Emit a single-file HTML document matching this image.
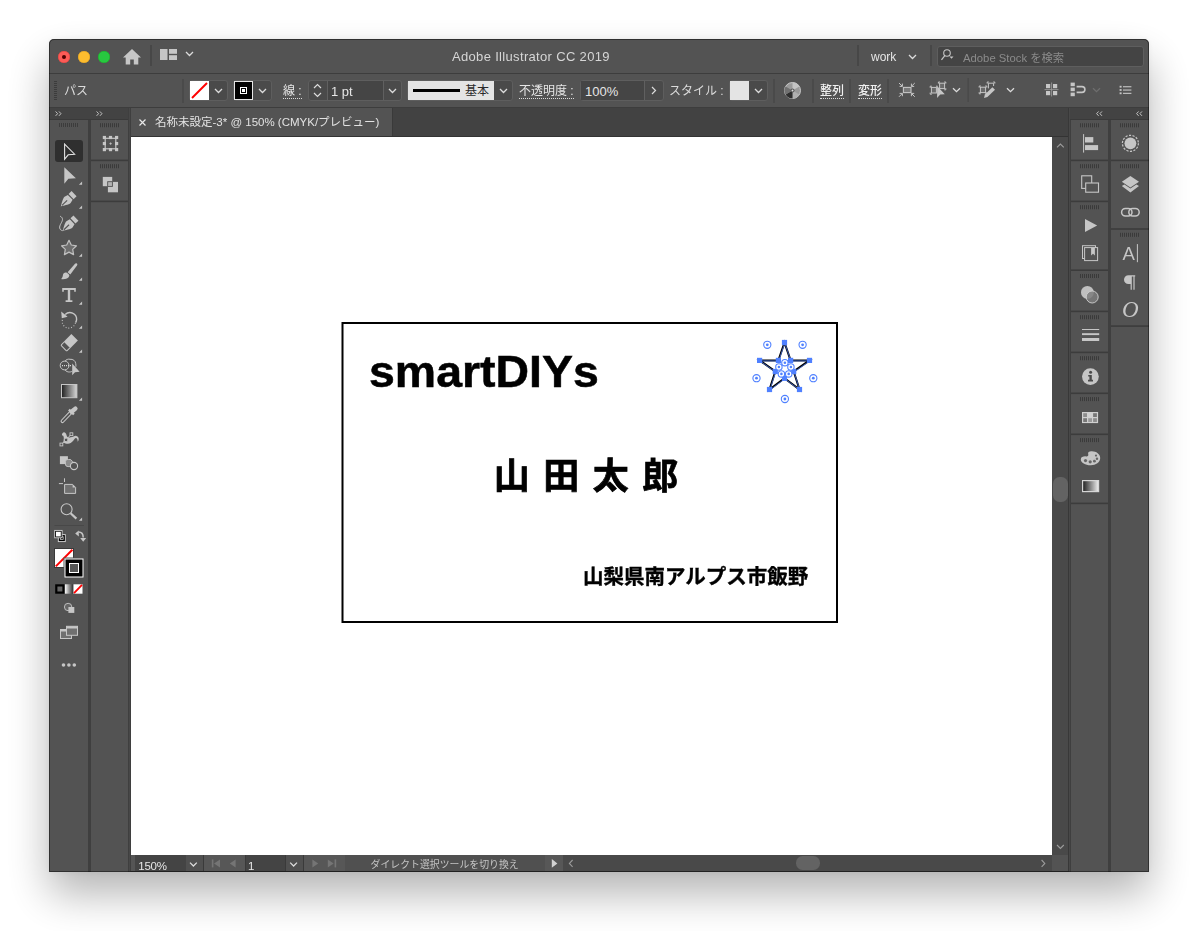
<!DOCTYPE html>
<html lang="ja">
<head>
<meta charset="utf-8">
<title>Adobe Illustrator CC 2019</title>
<style>
*{box-sizing:border-box;margin:0;padding:0}
html,body{width:1204px;height:931px;overflow:hidden;background:#fff}
body{font-family:"Liberation Sans","Noto Sans CJK JP",sans-serif;color:#dcdcdc;font-size:12px;position:relative}
.abs{position:absolute}
#win{opacity:.999;position:absolute;left:49px;top:39px;width:1100px;height:833px;background:#535353;border-radius:5px 5px 0 0;
 box-shadow:0 22px 44px rgba(0,0,0,.30),0 0 6px rgba(0,0,0,.06);overflow:hidden}
#win>*{position:absolute}
/* all coordinates below are page coords minus (49,39) */
#titlebar{left:0;top:0;width:1100px;height:35px;background:#535353;border-bottom:1px solid #3d3d3d}
#ctrlbar{left:0;top:35px;width:1100px;height:34px;background:#535353;border-bottom:1px solid #3d3d3d}
.tl{position:absolute;width:12px;height:12px;border-radius:50%;top:12px}
.t{position:absolute;white-space:nowrap;line-height:1}
.sep{position:absolute;width:1px;background:#484848}
.box{position:absolute;border:1px solid #5e5e5e;border-radius:3px;background:#4a4a4a}
.dark{background:#454545}
.dot{border-bottom:1px dotted #dcdcdc}
svg{position:absolute;overflow:visible}
.panel{position:absolute;background:#535353;border:1px solid #3f3f3f}
.grip{position:absolute;height:4px;width:20px;background:repeating-linear-gradient(90deg,#3c3c3c 0 1px,transparent 1px 2px)}
#frame{left:0;top:0;width:1100px;height:833px;border:1px solid rgba(0,0,0,.42);border-radius:5px 5px 0 0;pointer-events:none;z-index:50}
</style>
</head>
<body>
<div id="win">
 <div id="titlebar">
  <div class="tl" style="left:9px;background:#fc5b57;box-shadow:inset 0 0 0 .5px #e2443f"><div class="abs" style="left:4px;top:4px;width:4px;height:4px;border-radius:50%;background:#4d0000"></div></div>
  <div class="tl" style="left:29px;background:#fdbc2e;box-shadow:inset 0 0 0 .5px #dfa023"></div>
  <div class="tl" style="left:49px;background:#28c840;box-shadow:inset 0 0 0 .5px #1dad2b"></div>
  <svg style="left:74px;top:10px" width="18" height="16" viewBox="0 0 18 16"><path d="M9 0 L18 8.6 H15.3 V15.5 H10.8 V10.6 H7.2 V15.5 H2.7 V8.6 H0 Z" fill="#c6c6c6"/></svg>
  <div class="sep" style="left:101px;top:6px;height:21px;background:#474747;width:2px"></div>
  <svg style="left:111px;top:10px" width="17" height="11" viewBox="0 0 17 11"><rect x="0" y="0" width="7.5" height="11" fill="#c6c6c6"/><rect x="9" y="0" width="8" height="4.8" fill="#c6c6c6"/><rect x="9" y="6.2" width="8" height="4.8" fill="#c6c6c6"/></svg>
  <svg style="left:136px;top:12px" width="9" height="6" viewBox="0 0 9 6"><path d="M1 1 L4.5 4.5 L8 1" fill="none" stroke="#dcdcdc" stroke-width="1.3"/></svg>
  <div class="t" style="left:403px;top:11px;font-size:13px;letter-spacing:.33px;color:#d6d6d6">Adobe Illustrator CC 2019</div>
  <div class="sep" style="left:808px;top:6px;height:21px;background:#474747;width:2px"></div>
  <div class="t" style="left:822px;top:12px;font-size:12px;color:#e6e6e6">work</div>
  <svg style="left:859px;top:15px" width="9" height="6" viewBox="0 0 9 6"><path d="M1 1 L4.5 4.5 L8 1" fill="none" stroke="#dcdcdc" stroke-width="1.3"/></svg>
  <div class="sep" style="left:881px;top:6px;height:21px;background:#474747;width:2px"></div>
  <div class="box" style="left:888px;top:7px;width:207px;height:21px;background:#444;border-color:#5e5e5e"></div>
  <svg style="left:892px;top:10px" width="13" height="12" viewBox="0 0 13 12"><circle cx="6" cy="4" r="3.3" fill="none" stroke="#c6c6c6" stroke-width="1.1"/><path d="M3.8 6.6 L0.5 10.8" stroke="#c6c6c6" stroke-width="1.2"/><path d="M8.5 7.5 H12.5 L10.5 9.7 Z" fill="#c6c6c6"/></svg>
  <div class="t" style="left:914px;top:13.5px;font-size:11.3px;color:#8b8b8b">Adobe Stock を検索</div>
 </div>
 <div id="ctrlbar">
  <div class="abs" style="left:5px;top:7px;width:3px;height:19px;background:repeating-linear-gradient(180deg,#3c3c3c 0 1px,transparent 1px 2px)"></div>
  <div class="t" style="left:15px;top:11px;font-size:12px;color:#dcdcdc">パス</div>
  <div class="sep" style="left:133px;top:5px;height:24px;width:2px;background:#4a4a4a"></div>
  <!-- fill -->
  <div class="box" style="left:140px;top:6px;width:39px;height:21px"></div>
  <div class="abs" style="left:141px;top:7px;width:19px;height:19px;background:#fff"></div>
  <svg style="left:141px;top:7px" width="19" height="19" viewBox="0 0 19 19"><path d="M2 17 L17 2" stroke="#ff0000" stroke-width="2"/></svg>
  <svg style="left:165px;top:14px" width="9" height="6" viewBox="0 0 9 6"><path d="M1 1 L4.5 4.5 L8 1" fill="none" stroke="#dcdcdc" stroke-width="1.3"/></svg>
  <!-- stroke -->
  <div class="box" style="left:184px;top:6px;width:39px;height:21px"></div>
  <div class="abs" style="left:185px;top:7px;width:19px;height:19px;background:#000;border:1px solid #e6e6e6"></div>
  <div class="abs" style="left:191px;top:13px;width:7px;height:7px;border:1px solid #fff"></div>
  <div class="abs" style="left:193px;top:15px;width:3px;height:3px;background:#fff"></div>
  <svg style="left:209px;top:14px" width="9" height="6" viewBox="0 0 9 6"><path d="M1 1 L4.5 4.5 L8 1" fill="none" stroke="#dcdcdc" stroke-width="1.3"/></svg>
  <div class="t dot" style="left:234px;top:11px;font-size:12px;color:#e6e6e6;padding-bottom:1px">線&nbsp;:</div>
  <!-- stroke weight -->
  <div class="box" style="left:259px;top:6px;width:94px;height:21px"></div>
  <div class="abs dark" style="left:278px;top:7px;width:57px;height:19px;border-left:1px solid #606060;border-right:1px solid #606060"></div>
  <svg style="left:264px;top:9px" width="9" height="15" viewBox="0 0 9 15"><path d="M1 5 L4.5 1.5 L8 5 M1 10 L4.5 13.5 L8 10" fill="none" stroke="#dcdcdc" stroke-width="1.2"/></svg>
  <div class="t" style="left:282px;top:11px;font-size:13px;color:#e6e6e6">1 pt</div>
  <svg style="left:339px;top:14px" width="9" height="6" viewBox="0 0 9 6"><path d="M1 1 L4.5 4.5 L8 1" fill="none" stroke="#dcdcdc" stroke-width="1.3"/></svg>
  <!-- brush -->
  <div class="box" style="left:358px;top:6px;width:106px;height:21px"></div>
  <div class="abs" style="left:359px;top:7px;width:86px;height:19px;background:#e4e4e4"></div>
  <div class="abs" style="left:364px;top:15px;width:47px;height:3px;background:#000"></div>
  <div class="t" style="left:416px;top:11px;font-size:12px;color:#2a2a2a">基本</div>
  <svg style="left:450px;top:14px" width="9" height="6" viewBox="0 0 9 6"><path d="M1 1 L4.5 4.5 L8 1" fill="none" stroke="#dcdcdc" stroke-width="1.3"/></svg>
  <div class="t dot" style="left:470px;top:11px;font-size:12px;color:#e6e6e6;padding-bottom:1px">不透明度&nbsp;:</div>
  <div class="box" style="left:531px;top:6px;width:84px;height:21px"></div>
  <div class="abs dark" style="left:532px;top:7px;width:64px;height:19px;border-right:1px solid #606060"></div>
  <div class="t" style="left:536px;top:11px;font-size:13px;color:#e6e6e6">100%</div>
  <svg style="left:602px;top:12px" width="6" height="9" viewBox="0 0 6 9"><path d="M1 1 L4.5 4.5 L1 8" fill="none" stroke="#dcdcdc" stroke-width="1.2"/></svg>
  <div class="t" style="left:620px;top:11px;font-size:12px;color:#dcdcdc">スタイル&nbsp;:</div>
  <div class="box" style="left:680px;top:6px;width:39px;height:21px"></div>
  <div class="abs" style="left:681px;top:7px;width:19px;height:19px;background:#e4e4e4"></div>
  <svg style="left:705px;top:14px" width="9" height="6" viewBox="0 0 9 6"><path d="M1 1 L4.5 4.5 L8 1" fill="none" stroke="#dcdcdc" stroke-width="1.3"/></svg>
  <div class="sep" style="left:724px;top:5px;height:24px;width:2px;background:#4a4a4a"></div>
  <svg style="left:735px;top:8px" width="17" height="17" viewBox="0 0 17 17"><circle cx="8.5" cy="8.5" r="8" fill="#9a9a9a" stroke="#c8c8c8" stroke-width="1"/><path d="M8.5 8.5 L8.5 .5 A8 8 0 0 1 15.4 4.5 Z" fill="#c4c4c4"/><path d="M8.5 8.5 L15.4 12.5 A8 8 0 0 1 8.5 16.5 Z" fill="#b0b0b0"/><path d="M8.5 8.5 L8.5 16.5 A8 8 0 0 1 1.6 12.5 Z" fill="#2e2e2e"/><path d="M8.5 8.5 L1.6 12.5 A8 8 0 0 1 1.6 4.5 Z" fill="#707070"/><circle cx="8.5" cy="8.5" r="2" fill="#555"/><circle cx="8.5" cy="8.5" r="1" fill="#ddd"/></svg>
  <div class="sep" style="left:763px;top:5px;height:24px;width:2px;background:#4a4a4a"></div>
  <div class="t dot" style="left:771px;top:11px;font-size:12px;color:#f0f0f0;padding-bottom:1px;font-weight:500">整列</div>
  <div class="sep" style="left:800px;top:5px;height:24px;width:2px;background:#4a4a4a"></div>
  <div class="t dot" style="left:809px;top:11px;font-size:12px;color:#f0f0f0;padding-bottom:1px;font-weight:500">変形</div>
  <div class="sep" style="left:838px;top:5px;height:24px;width:2px;background:#4a4a4a"></div>
  <svg style="left:0;top:0" width="1100" height="33" viewBox="49 74 1100 33">
<g fill="none" stroke="#c6c6c6" stroke-width="1">
 <!-- isolate -->
 <rect x="903.4" y="87.4" width="7.6" height="5.2" fill="#7a7a7a" stroke-width="1.1"/>
 <path d="M899,83 L902.2,86.2 M914.8,83 L911.6,86.2 M899,96.8 L902.2,93.6 M914.8,96.8 L911.6,93.6"/>
 <path d="M899.6,86.4 H902.4 V83.6 M914.2,86.4 H911.4 V83.6 M899.6,93.4 H902.4 V96.2 M914.2,93.4 H911.4 V96.2"/>
 <!-- select similar -->
 <rect x="931.4" y="87.4" width="5" height="5.6" fill="#6a6a6a"/>
 <path d="M930.2,86.2 h1.6 M930.2,86.2 v1.6 M930.2,94.2 h1.6 M930.2,94.2 v-1.6 M937.6,86.2 h-1.6"/>
 <rect x="939.6" y="83.2" width="5" height="5.4" fill="#6a6a6a"/>
 <path d="M938.4,82 h1.6 M938.4,82 v1.6 M945.8,82 h-1.6 M945.8,82 v1.6 M945.8,89.8 h-1.6 M945.8,89.8 v-1.6 M938.4,89.8 v-1.6"/>
 <!-- recolor -->
 <rect x="980.4" y="87.2" width="5.2" height="5.4" fill="#6a6a6a"/>
 <path d="M979.2,86 h1.6 M979.2,86 v1.6 M979.2,93.8 h1.6 M979.2,93.8 v-1.6 M986.8,86 h-1.6 M986.8,86 v1.6 M986.8,93.8 h-1.6 M986.8,93.8 v-1.6"/>
 <path d="M988.4,88.4 V83.2 H993.6 V86" />
 <path d="M987.2,82 h1.6 M987.2,82 v1.6 M994.8,82 h-1.6 M994.8,82 v1.6"/>
</g>
<path d="M937.1,86 V98 L940.2,94.6 L944.8,94.2 Z" fill="#c6c6c6"/>
<path d="M992.4,87.2 L995,89.8 L987.4,97 L984,97.9 L984.9,94.5 Z" fill="#c6c6c6"/>
<g fill="none" stroke="#dcdcdc" stroke-width="1.3">
 <path d="M953,88.2 L956.5,91.7 L960,88.2"/>
 <path d="M1007,88.2 L1010.5,91.7 L1014,88.2"/>
 <path d="M1093,88.2 L1096.5,91.7 L1100,88.2" stroke="#6e6e6e"/>
</g>
<rect x="967.4" y="78" width="1.6" height="24" fill="#4a4a4a"/>
<!-- grid icon -->
<g fill="#c6c6c6">
 <rect x="1046" y="84" width="4.2" height="4.2"/><rect x="1053" y="84" width="4.2" height="4.2"/><rect x="1046" y="91" width="4.2" height="4.2"/><rect x="1053" y="91" width="4.2" height="4.2"/>
 <rect x="1051.2" y="82.5" width=".9" height="14" fill="#9a9a9a"/><rect x="1044.5" y="89.2" width="14" height=".9" fill="#9a9a9a"/>
 <!-- snap icon -->
 <rect x="1070.6" y="82.6" width="4.2" height="3.6"/><rect x="1070.6" y="87.6" width="4.2" height="3.6"/><rect x="1070.6" y="92.6" width="4.2" height="3.6"/>
 <!-- list icon -->
 <rect x="1119.6" y="85.8" width="2" height="1.8"/><rect x="1119.6" y="89.1" width="2" height="1.8"/><rect x="1119.6" y="92.4" width="2" height="1.8"/>
 <rect x="1123" y="86.2" width="8.4" height="1.1"/><rect x="1123" y="89.5" width="8.4" height="1.1"/><rect x="1123" y="92.8" width="8.4" height="1.1"/>
</g>
<path d="M1076.6,86.6 H1082 A2.9,2.9 0 0 1 1082,92.4 H1076.6" fill="none" stroke="#c6c6c6" stroke-width="1.6"/>
</svg>

 </div>

 <!-- LEFT DOCK -->
 <div id="ldock" style="left:0;top:69px;width:82px;height:764px;background:#3f3f3f">
  <div class="abs" style="left:0;top:0;width:79px;height:12px;background:#434343;border-bottom:1px solid #3a3a3a"></div>
  <svg style="left:5.8px;top:3.4px" width="7" height="5.3" viewBox="0 0 8 6"><path d="M.7 .5 L3 3 L.7 5.5 M4.5 .5 L6.8 3 L4.5 5.5" fill="none" stroke="#c8c8c8" stroke-width="1.1"/></svg><svg style="left:46.8px;top:3.4px" width="7" height="5.3" viewBox="0 0 8 6"><path d="M.7 .5 L3 3 L.7 5.5 M4.5 .5 L6.8 3 L4.5 5.5" fill="none" stroke="#c8c8c8" stroke-width="1.1"/></svg>
  <div class="abs" id="tools" style="left:0;top:12px;width:39px;height:752px;background:#535353">
   <div class="grip" style="left:10px;top:3px"></div>
   <svg style="left:0;top:0" width="39" height="752" viewBox="49 120 39 752">
<defs>
 <g id="nib"><path d="M0,0.4 C-1.2,-1.8 -4.4,-6.4 -4.4,-9 L-3.4,-12.7 L3.4,-12.7 L4.4,-9 C4.4,-6.4 1.2,-1.8 0,0.4Z" fill="#c6c6c6"/><path d="M0,-1.2 L0,-8.4" stroke="#535353" stroke-width="1.1"/><rect x="-3.6" y="-18" width="7.2" height="4.1" fill="#c6c6c6"/></g>
 <linearGradient id="gr1" x1="0" x2="1" y1="0" y2="0"><stop offset="0" stop-color="#1e1e1e"/><stop offset="1" stop-color="#d8d8d8"/></linearGradient>
 <linearGradient id="gr2" x1="0" x2="1" y1="0" y2="0"><stop offset="0" stop-color="#fff"/><stop offset="1" stop-color="#333"/></linearGradient>
</defs>
<g fill="#c6c6c6">
<!-- corner triangles -->
<path d="M82.1,181.6V184.8H78.9Z M82.1,205.6V208.8H78.9Z M82.1,253.6V256.8H78.9Z M82.1,277.6V280.8H78.9Z M82.1,301.6V304.8H78.9Z M82.1,325.6V328.8H78.9Z M82.1,349.6V352.8H78.9Z M82.1,397.6V400.8H78.9Z M82.1,517.6V520.8H78.9Z"/>
</g>
<!-- 0 selection -->
<rect x="55" y="140" width="28" height="22" rx="3" fill="#2f2f2f"/>
<path d="M64.6,144.2 V159.2 L68.2,154.8 L74.6,154.2 Z" fill="none" stroke="#e2e2e2" stroke-width="1.1" stroke-linejoin="miter"/>
<!-- 1 direct selection -->
<path d="M64.3,167.2 V183.8 L68.4,178.8 L75.9,178.2 Z" fill="#c6c6c6"/>
<!-- 2 pen -->
<use href="#nib" transform="translate(61.1,206.2) rotate(46)"/>
<!-- 3 curvature -->
<use href="#nib" transform="translate(63,230.6) rotate(46)"/>
<path d="M60.2,216.2 C63.6,218 62.6,220.6 61,223.4 C59,226.8 59,230 62.7,230.7" fill="none" stroke="#c6c6c6" stroke-width="1"/>
<!-- 4 star -->
<polygon points="69.0,240.3 71.3,245.0 76.5,245.8 72.7,249.4 73.6,254.6 69.0,252.1 64.4,254.6 65.3,249.4 61.5,245.8 66.7,245.0" fill="#6e6e6e" stroke="#c0c0c0" stroke-width="1.2" stroke-linejoin="round"/>
<!-- 5 brush -->
<path d="M76.3,263.3 C77.4,263.6 77.6,264.6 77,265.6 L70.3,274.6 L67.6,272.2 L75,263.8 C75.4,263.4 75.8,263.2 76.3,263.3Z" fill="#c6c6c6"/>
<path d="M67.2,273 C65.2,271.8 63.2,273 62.9,275.2 C62.7,277 62,278.3 61,279 C64.5,279.6 68.4,278.6 69.3,276 C69.6,274.9 68.8,273.8 67.2,273Z" fill="#c6c6c6"/>
<!-- 6 type -->
<path d="M62.2,287.9 H75.8 V291.8 H74.2 V290 H70.2 V300.2 H72.4 V301.9 H65.6 V300.2 H67.8 V290 H63.8 V291.8 H62.2 Z" fill="#c6c6c6"/>
<!-- 7 rotate -->
<path d="M65.2,314.6 A6.6,6.6 0 0 1 76.6,319.4 A6.6,6.6 0 0 1 75.6,322.6" fill="none" stroke="#c6c6c6" stroke-width="1.4"/>
<path d="M75.4,323 A6.6,6.6 0 0 1 62.4,319.8" fill="none" stroke="#c6c6c6" stroke-width="1.1" stroke-dasharray="0.9 1.9"/>
<path d="M61.2,311.6 L61.8,318.2 L67.6,316.8 Z" fill="#c6c6c6"/>
<!-- 8 eraser -->
<g transform="translate(69.4,342.5) rotate(-45)"><rect x="-3.4" y="-4.6" width="10.8" height="9.2" fill="#c6c6c6"/><path d="M-3.4,-4.1 H-7 A1,1 0 0 0 -8,-3.1 V3.1 A1,1 0 0 0 -7,4.1 H-3.4" fill="none" stroke="#c6c6c6" stroke-width="1"/></g>
<!-- 9 shape builder -->
<circle cx="64.6" cy="365.5" r="4.4" fill="none" stroke="#c6c6c6" stroke-width="1"/>
<path d="M65,361.2 C66,359.5 68.4,358.8 70,359.3 C73,358.9 75.4,360.9 75.7,363.4 C75.9,364.6 76,365.8 75.9,366.7 M65,369.9 C66.2,371.5 68,372.1 69.4,372 C70.4,372 71,371.8 71.8,371.5" fill="none" stroke="#c6c6c6" stroke-width="1"/>
<path d="M62,365.6 H71.6" stroke="#d6d6d6" stroke-width="1.1" stroke-dasharray="1 1"/>
<path d="M72.2,363.4 V375.2 L75,372.2 L79.6,371.7 Z" fill="#c6c6c6"/>
<!-- 10 gradient -->
<rect x="61.5" y="384.5" width="15.4" height="13.2" fill="url(#gr1)" stroke="#c6c6c6" stroke-width="1"/>
<!-- 11 eyedropper -->
<path d="M62.4,421.2 L70.6,412.6" stroke="#c6c6c6" stroke-width="3.7" stroke-linecap="round"/>
<path d="M62.5,421.1 L71.4,411.8" stroke="#535353" stroke-width="1.7" stroke-linecap="round"/>
<path d="M71.6,411.8 L75.4,408.6" stroke="#c6c6c6" stroke-width="4.4" stroke-linecap="round"/>
<path d="M68.9,409.7 L73.9,414.5" stroke="#c6c6c6" stroke-width="2.4"/>
<!-- 12 puppet warp -->
<path d="M62,435.6 C61.6,433.4 63,432.1 64.2,432.2 C65.6,432.4 66.4,434.2 66.9,436.2 C67.4,437.6 69.6,437.9 72,437.1 C73.6,436.5 74.6,435.6 75.8,435.7 C77.8,435.9 79,437.6 78.7,439.6 C78.6,440.6 78.2,441.4 77.7,441.8 C77.7,440 77.2,438.4 76.1,438.1 C75,437.9 74.2,439.8 73,441 C71.6,442.6 70,443.8 67.9,443.8 C66.2,443.8 64.6,443.4 63.5,442.5 C63.2,441.2 63.9,439.8 63.8,438.4 C63.8,437.4 63.7,436.4 63.2,435.8 C62.8,435.4 62.4,435.4 62,435.6Z" fill="#c6c6c6"/>
<path d="M61.4,444.5 L71.4,434.2" stroke="#c6c6c6" stroke-width="1"/>
<rect x="60" y="443.1" width="2.8" height="2.8" fill="#535353" stroke="#c6c6c6" stroke-width=".9"/>
<circle cx="66.1" cy="439.9" r="1.8" fill="#535353" stroke="#c6c6c6" stroke-width=".9"/>
<rect x="70" y="432.8" width="2.8" height="2.8" fill="#535353" stroke="#c6c6c6" stroke-width=".9"/>
<!-- 13 blend -->
<rect x="59.9" y="456.2" width="8" height="7.9" fill="#c6c6c6"/>
<path d="M68.4,459.5 H70.6 L72.6,461.5 V466.6 H68 A2.6,2.6 0 0 1 65.4,464 V461.6 A2.1,2.1 0 0 1 67.5,459.5Z" fill="#8a8a8a" stroke="#c6c6c6" stroke-width=".9"/>
<circle cx="74" cy="466" r="3.6" fill="#535353" stroke="#c6c6c6" stroke-width="1.1"/>
<!-- 14 artboard -->
<path d="M64.5,478.3 V482 M58.9,483.6 H63" stroke="#c6c6c6" stroke-width="1"/>
<path d="M64.6,484.4 H72.6 L75.6,487.4 V493.4 H64.6 Z" fill="#707070" stroke="#c6c6c6" stroke-width="1"/>
<path d="M72.6,484.4 V487.4 H75.6 Z" fill="#c6c6c6"/>
<!-- 15 zoom -->
<circle cx="66.6" cy="509.3" r="5.5" fill="none" stroke="#c6c6c6" stroke-width="1.1"/>
<path d="M70.6,513.3 L76.4,518.6" stroke="#c6c6c6" stroke-width="2.2"/>
<!-- separator -->
<path d="M54.5,525.5 H84" stroke="#484848" stroke-width="1"/>
<!-- default fill/stroke -->
<rect x="58.3" y="534.6" width="7" height="7" fill="#000" stroke="#d8d8d8" stroke-width=".9"/>
<rect x="60.4" y="536.7" width="2.8" height="2.8" fill="none" stroke="#d8d8d8" stroke-width=".7"/>
<rect x="54.7" y="530.4" width="7.4" height="7.4" fill="#000" stroke="#d8d8d8" stroke-width=".9"/>
<rect x="56" y="531.7" width="4.8" height="4.8" fill="#fff"/>
<!-- swap -->
<path d="M78.6,532 C81.6,532 83.2,534.2 83.2,537.6" fill="none" stroke="#c6c6c6" stroke-width="1.5"/>
<path d="M75.2,533.4 L78.8,530.4 V536.4 Z M80.2,538 H86.2 L83.2,541.8 Z" fill="#c6c6c6"/>
<!-- fill -->
<rect x="54.5" y="548.5" width="19" height="19" fill="#fff" stroke="#3a3a3a" stroke-width="1"/>
<path d="M55.8,566.4 L72.4,549.8" stroke="#ff0000" stroke-width="2"/>
<!-- stroke -->
<rect x="63.5" y="557.5" width="21" height="21" fill="#535353"/>
<rect x="65" y="559" width="18" height="18" fill="#000" stroke="#fff" stroke-width="1"/>
<rect x="69.5" y="563.5" width="9" height="9" fill="#555" stroke="#fff" stroke-width="1"/>
<!-- color modes -->
<rect x="55.2" y="584.3" width="9.4" height="9.4" fill="#000"/><rect x="57.4" y="586.5" width="5" height="5" fill="#666"/>
<rect x="64.9" y="584.3" width="8" height="9.4" fill="url(#gr2)"/>
<rect x="73.5" y="584.3" width="9" height="9.4" fill="#fff"/><path d="M74,593.2 L82,584.8" stroke="#ff0000" stroke-width="1.8"/>
<!-- draw mode -->
<circle cx="68.1" cy="607" r="3.7" fill="#666" stroke="#c6c6c6" stroke-width=".9"/>
<rect x="68.4" y="607" width="5.9" height="5.9" fill="#c6c6c6"/>
<!-- screen mode -->
<rect x="60.5" y="629.5" width="11" height="9" fill="#707070" stroke="#c6c6c6" stroke-width="1"/><rect x="60.5" y="629.5" width="11" height="2" fill="#c6c6c6"/>
<rect x="66.5" y="626.3" width="11" height="9" fill="#707070" stroke="#c6c6c6" stroke-width="1"/><rect x="66.5" y="626.3" width="11" height="2.2" fill="#c6c6c6"/>
<!-- more -->
<circle cx="63.5" cy="665" r="1.8" fill="#c6c6c6"/><circle cx="68.9" cy="665" r="1.8" fill="#c6c6c6"/><circle cx="74.3" cy="665" r="1.8" fill="#c6c6c6"/>
</svg>

  </div>
  <div class="abs" style="left:80px;top:0;width:1px;height:764px;background:#484848"></div>
  <div class="abs" style="left:42px;top:12px;width:37px;height:752px;background:#535353;overflow:hidden">
   <svg style="left:0;top:0" width="38" height="752" viewBox="91 120 38 752">
<rect x="100" y="123.2" width="1" height="4" fill="#3a3a3a"/><rect x="102" y="123.2" width="1" height="4" fill="#3a3a3a"/><rect x="104" y="123.2" width="1" height="4" fill="#3a3a3a"/><rect x="106" y="123.2" width="1" height="4" fill="#3a3a3a"/><rect x="108" y="123.2" width="1" height="4" fill="#3a3a3a"/><rect x="110" y="123.2" width="1" height="4" fill="#3a3a3a"/><rect x="112" y="123.2" width="1" height="4" fill="#3a3a3a"/><rect x="114" y="123.2" width="1" height="4" fill="#3a3a3a"/><rect x="116" y="123.2" width="1" height="4" fill="#3a3a3a"/><rect x="118" y="123.2" width="1" height="4" fill="#3a3a3a"/><rect x="100" y="164.2" width="1" height="4" fill="#3a3a3a"/><rect x="102" y="164.2" width="1" height="4" fill="#3a3a3a"/><rect x="104" y="164.2" width="1" height="4" fill="#3a3a3a"/><rect x="106" y="164.2" width="1" height="4" fill="#3a3a3a"/><rect x="108" y="164.2" width="1" height="4" fill="#3a3a3a"/><rect x="110" y="164.2" width="1" height="4" fill="#3a3a3a"/><rect x="112" y="164.2" width="1" height="4" fill="#3a3a3a"/><rect x="114" y="164.2" width="1" height="4" fill="#3a3a3a"/><rect x="116" y="164.2" width="1" height="4" fill="#3a3a3a"/><rect x="118" y="164.2" width="1" height="4" fill="#3a3a3a"/>
<rect x="91" y="159.6" width="38" height="1.6" fill="#3c3c3c"/><rect x="91" y="200.6" width="38" height="1.6" fill="#3c3c3c"/>
<rect x="105.2" y="138.3" width="10.6" height="10.5" fill="none" stroke="#c6c6c6" stroke-width="1.2"/>
<rect x="102.80" y="135.90" width="3.2" height="3.2" fill="#c6c6c6"/><rect x="102.80" y="141.95" width="3.2" height="3.2" fill="#c6c6c6"/><rect x="102.80" y="148.00" width="3.2" height="3.2" fill="#c6c6c6"/><rect x="108.90" y="135.90" width="3.2" height="3.2" fill="#c6c6c6"/><rect x="108.90" y="148.00" width="3.2" height="3.2" fill="#c6c6c6"/><rect x="115.00" y="135.90" width="3.2" height="3.2" fill="#c6c6c6"/><rect x="115.00" y="141.95" width="3.2" height="3.2" fill="#c6c6c6"/><rect x="115.00" y="148.00" width="3.2" height="3.2" fill="#c6c6c6"/>
<path d="M109.4,143.6 H111.8 M110.6,142.4 V144.8" stroke="#c6c6c6" stroke-width=".8"/>
<rect x="102.8" y="176.9" width="9.4" height="9.3" fill="#c6c6c6"/>
<rect x="107.9" y="181.9" width="10.1" height="10.4" fill="#c6c6c6"/>
<rect x="107.7" y="181.7" width="4.7" height="4.7" fill="#b4b4b4" stroke="#505050" stroke-width=".9"/>
</svg>
  </div>
 </div>
 <!-- DOC AREA -->
 <div id="doc" style="left:82px;top:69px;width:939px;height:764px;background:#424242">
  <div class="abs" style="left:0;top:0;width:261px;height:28px;background:#535353"></div><div class="abs" style="left:261px;top:0;width:1px;height:28px;background:#3a3a3a"></div><div class="abs" style="left:0;top:28px;width:939px;height:1px;background:#333"></div>
  <svg style="left:8px;top:11px" width="7" height="7" viewBox="0 0 7 7"><path d="M.5 .5 L6.5 6.5 M6.5 .5 L.5 6.5" stroke="#e8e8e8" stroke-width="1.2"/></svg>
  <div class="t" style="left:24px;top:8.5px;font-size:11.5px;color:#e2e2e2">名称未設定-3* @ 150% (CMYK/プレビュー)</div>
  <div class="abs" id="canvas" style="left:0;top:29px;width:921px;height:718px;background:#fff">
   <svg style="left:0;top:0" width="921" height="718" viewBox="0 0 921 718">
    <rect x="211.5" y="186" width="494.5" height="299" fill="none" stroke="#000" stroke-width="2"/>
    <polygon points="653.5,205.5 659.6,223.4 678.5,223.4 662.7,234.5 668.5,252.5 653.5,241.3 638.5,252.5 644.3,234.5 628.6,223.4 647.4,223.4" fill="none" stroke="#000" stroke-width="2"/>
    <polygon points="653.5,205.5 659.6,223.4 678.5,223.4 662.7,234.5 668.5,252.5 653.5,241.3 638.5,252.5 644.3,234.5 628.6,223.4 647.4,223.4" fill="none" stroke="#4f80ff" stroke-width="0.7" transform="translate(.3,.5)"/>
    <rect x="650.90" y="202.90" width="5.2" height="5.2" fill="#4f80ff"/><rect x="657.00" y="220.80" width="5.2" height="5.2" fill="#4f80ff"/><rect x="675.90" y="220.80" width="5.2" height="5.2" fill="#4f80ff"/><rect x="660.10" y="231.90" width="5.2" height="5.2" fill="#4f80ff"/><rect x="665.90" y="249.90" width="5.2" height="5.2" fill="#4f80ff"/><rect x="650.90" y="238.70" width="5.2" height="5.2" fill="#4f80ff"/><rect x="635.90" y="249.90" width="5.2" height="5.2" fill="#4f80ff"/><rect x="641.70" y="231.90" width="5.2" height="5.2" fill="#4f80ff"/><rect x="626.00" y="220.80" width="5.2" height="5.2" fill="#4f80ff"/><rect x="644.80" y="220.80" width="5.2" height="5.2" fill="#4f80ff"/><circle cx="636.3" cy="207.8" r="3.6" fill="#fff" stroke="#4f80ff" stroke-width="1.1"/><circle cx="636.3" cy="207.8" r="1.4" fill="#4f80ff"/><circle cx="671.6" cy="207.8" r="3.6" fill="#fff" stroke="#4f80ff" stroke-width="1.1"/><circle cx="671.6" cy="207.8" r="1.4" fill="#4f80ff"/><circle cx="625.5" cy="241.2" r="3.6" fill="#fff" stroke="#4f80ff" stroke-width="1.1"/><circle cx="625.5" cy="241.2" r="1.4" fill="#4f80ff"/><circle cx="682.3" cy="241.2" r="3.6" fill="#fff" stroke="#4f80ff" stroke-width="1.1"/><circle cx="682.3" cy="241.2" r="1.4" fill="#4f80ff"/><circle cx="653.9" cy="262" r="3.6" fill="#fff" stroke="#4f80ff" stroke-width="1.1"/><circle cx="653.9" cy="262" r="1.4" fill="#4f80ff"/><circle cx="653.9" cy="225.7" r="3.2" fill="#fff" stroke="#4f80ff" stroke-width="1.1"/><circle cx="653.9" cy="225.7" r="1.3" fill="#4f80ff"/><circle cx="647.9" cy="230" r="3.2" fill="#fff" stroke="#4f80ff" stroke-width="1.1"/><circle cx="647.9" cy="230" r="1.3" fill="#4f80ff"/><circle cx="659.9" cy="230" r="3.2" fill="#fff" stroke="#4f80ff" stroke-width="1.1"/><circle cx="659.9" cy="230" r="1.3" fill="#4f80ff"/><circle cx="650.4" cy="236.9" r="3.2" fill="#fff" stroke="#4f80ff" stroke-width="1.1"/><circle cx="650.4" cy="236.9" r="1.3" fill="#4f80ff"/><circle cx="657.7" cy="236.9" r="3.2" fill="#fff" stroke="#4f80ff" stroke-width="1.1"/><circle cx="657.7" cy="236.9" r="1.3" fill="#4f80ff"/>
   </svg>
   <div class="t" id="brand" style="left:237.60000000000002px;top:213.39999999999998px;font-size:44px;font-weight:bold;color:#000;transform-origin:0 0;transform:scaleX(1.056);-webkit-text-stroke:.5px #000">smartDIYs</div>
   <div class="t" id="name" style="left:362.8px;top:322.4px;font-size:36px;font-weight:bold;color:#000;font-family:'Liberation Sans','Noto Sans CJK JP',sans-serif;letter-spacing:13.5px;-webkit-text-stroke:.7px #000">山田太郎</div>
   <div class="t" id="addr" style="left:452px;top:429.79999999999995px;font-size:20.5px;font-weight:bold;color:#000;font-family:'Liberation Sans','Noto Sans CJK JP',sans-serif;-webkit-text-stroke:.35px #000">山梨県南アルプス市飯野</div>

  </div>
  <div class="abs" style="left:937px;top:0;width:1px;height:764px;background:#383838"></div><div class="abs" style="left:938px;top:0;width:1px;height:764px;background:#484848"></div>
  <div class="abs" id="vscroll" style="left:921px;top:29px;width:16px;height:718px;background:#494949"><svg style="left:0;top:0" width="16" height="718" viewBox="1052 137 16 718"><path d="M1057,147.4 L1060.4,144 L1063.8,147.4 M1057,845 L1060.4,848.4 L1063.8,845" fill="none" stroke="#9c9c9c" stroke-width="1.1"/><rect x="1053" y="477" width="15" height="25" rx="6.5" fill="#636363"/></svg></div>
  <div class="abs" id="bbar" style="left:0;top:747px;width:937px;height:17px;background:#3a3a3a;overflow:hidden"><div class="abs" style="left:0px;top:0;width:4px;height:16px;background:#555"></div>
<div class="abs" style="left:4px;top:0;width:50.5px;height:16px;background:#444"></div>
<div class="abs" style="left:55px;top:0;width:17px;height:16px;background:#505050"></div>
<div class="abs" style="left:72.5px;top:0;width:41.5px;height:16px;background:#575757"></div>
<div class="abs" style="left:114.5px;top:0;width:39.5px;height:16px;background:#444"></div>
<div class="abs" style="left:154.5px;top:0;width:17.5px;height:16px;background:#505050"></div>
<div class="abs" style="left:172.5px;top:0;width:41.0px;height:16px;background:#575757"></div>
<div class="abs" style="left:214px;top:0;width:199.5px;height:16px;background:#505050"></div>
<div class="abs" style="left:414px;top:0;width:17.5px;height:16px;background:#575757"></div>
<div class="abs" style="left:432px;top:0;width:489px;height:16px;background:#494949"></div>
<div class="abs" style="left:921px;top:0;width:16px;height:16px;background:#535353"></div>
<div class="t" style="left:7.2px;top:5.5px;font-size:11.5px;color:#e6e6e6;letter-spacing:-.2px">150%</div>
<div class="t" style="left:117px;top:5.5px;font-size:11.5px;color:#e6e6e6">1</div>
<div class="t" style="left:239.6px;top:4.5px;font-size:9.9px;color:#c4c4c4">ダイレクト選択ツールを切り換え</div>
<svg style="left:0;top:0" width="937" height="17" viewBox="131 855 937 17">
<g fill="none" stroke="#dcdcdc" stroke-width="1.3"><path d="M190,862.6 L193.4,866 L196.8,862.6"/><path d="M290.2,862.6 L293.6,866 L297,862.6"/></g>
<g fill="#757575"><rect x="211.8" y="859.4" width="1.6" height="8"/><path d="M220,859.4 V867.4 L214,863.4 Z"/><path d="M235.6,859.4 V867.4 L229.8,863.4 Z"/>
<path d="M312.4,859.4 V867.4 L318.2,863.4 Z"/><path d="M327.8,859.4 V867.4 L333.6,863.4 Z"/><rect x="334.6" y="859.4" width="1.6" height="8"/></g>
<path d="M551.8,859 V867.8 L557.4,863.4 Z" fill="#d2d2d2"/>
<path d="M572.6,860 L569.4,863.4 L572.6,866.8" fill="none" stroke="#9c9c9c" stroke-width="1.1"/>
<path d="M1041.6,860 L1044.8,863.4 L1041.6,866.8" fill="none" stroke="#9c9c9c" stroke-width="1.1"/>
<rect x="796" y="856" width="24" height="14" rx="6.5" fill="#636363"/>
</svg></div>
 </div>

 <div id="rdock" style="left:1021px;top:69px;width:79px;height:764px;background:#3f3f3f">
  <div class="abs" style="left:0;top:0;width:79px;height:12px;background:#434343;border-bottom:1px solid #3a3a3a"></div>
  <svg style="left:25.6px;top:3.4px" width="7" height="5.3" viewBox="0 0 8 6"><path d="M3 .5 L.7 3 L3 5.5 M6.8 .5 L4.5 3 L6.8 5.5" fill="none" stroke="#c8c8c8" stroke-width="1.1"/></svg><svg style="left:65.8px;top:3.4px" width="7" height="5.3" viewBox="0 0 8 6"><path d="M3 .5 L.7 3 L3 5.5 M6.8 .5 L4.5 3 L6.8 5.5" fill="none" stroke="#c8c8c8" stroke-width="1.1"/></svg>
  <div class="abs" style="left:1px;top:12px;width:37px;height:752px;background:#535353"></div>
<div class="abs" style="left:41px;top:12px;width:38px;height:752px;background:#535353"></div>
<svg style="left:0;top:0" width="79" height="764" viewBox="1070 108 79 764">
<defs><linearGradient id="gr3" x1="0" x2="1" y1="0" y2="0"><stop offset="0" stop-color="#1e1e1e"/><stop offset="1" stop-color="#f0f0f0"/></linearGradient></defs>
<rect x="1071" y="159.6" width="37" height="1.6" fill="#3c3c3c"/>
<rect x="1071" y="200.6" width="37" height="1.6" fill="#3c3c3c"/>
<rect x="1071" y="269.4" width="37" height="1.6" fill="#3c3c3c"/>
<rect x="1071" y="310.59999999999997" width="37" height="1.6" fill="#3c3c3c"/>
<rect x="1071" y="351.59999999999997" width="37" height="1.6" fill="#3c3c3c"/>
<rect x="1071" y="392.5" width="37" height="1.6" fill="#3c3c3c"/>
<rect x="1071" y="433.5" width="37" height="1.6" fill="#3c3c3c"/>
<rect x="1071" y="502.59999999999997" width="37" height="1.6" fill="#3c3c3c"/>
<rect x="1111" y="159.6" width="38" height="1.6" fill="#3c3c3c"/>
<rect x="1111" y="228.2" width="38" height="1.6" fill="#3c3c3c"/>
<rect x="1111" y="325.3" width="38" height="1.6" fill="#3c3c3c"/>
<rect x="1080" y="123.3" width="1" height="4" fill="#3a3a3a"/><rect x="1082" y="123.3" width="1" height="4" fill="#3a3a3a"/><rect x="1084" y="123.3" width="1" height="4" fill="#3a3a3a"/><rect x="1086" y="123.3" width="1" height="4" fill="#3a3a3a"/><rect x="1088" y="123.3" width="1" height="4" fill="#3a3a3a"/><rect x="1090" y="123.3" width="1" height="4" fill="#3a3a3a"/><rect x="1092" y="123.3" width="1" height="4" fill="#3a3a3a"/><rect x="1094" y="123.3" width="1" height="4" fill="#3a3a3a"/><rect x="1096" y="123.3" width="1" height="4" fill="#3a3a3a"/><rect x="1098" y="123.3" width="1" height="4" fill="#3a3a3a"/>
<rect x="1080" y="164.2" width="1" height="4" fill="#3a3a3a"/><rect x="1082" y="164.2" width="1" height="4" fill="#3a3a3a"/><rect x="1084" y="164.2" width="1" height="4" fill="#3a3a3a"/><rect x="1086" y="164.2" width="1" height="4" fill="#3a3a3a"/><rect x="1088" y="164.2" width="1" height="4" fill="#3a3a3a"/><rect x="1090" y="164.2" width="1" height="4" fill="#3a3a3a"/><rect x="1092" y="164.2" width="1" height="4" fill="#3a3a3a"/><rect x="1094" y="164.2" width="1" height="4" fill="#3a3a3a"/><rect x="1096" y="164.2" width="1" height="4" fill="#3a3a3a"/><rect x="1098" y="164.2" width="1" height="4" fill="#3a3a3a"/>
<rect x="1080" y="205.2" width="1" height="4" fill="#3a3a3a"/><rect x="1082" y="205.2" width="1" height="4" fill="#3a3a3a"/><rect x="1084" y="205.2" width="1" height="4" fill="#3a3a3a"/><rect x="1086" y="205.2" width="1" height="4" fill="#3a3a3a"/><rect x="1088" y="205.2" width="1" height="4" fill="#3a3a3a"/><rect x="1090" y="205.2" width="1" height="4" fill="#3a3a3a"/><rect x="1092" y="205.2" width="1" height="4" fill="#3a3a3a"/><rect x="1094" y="205.2" width="1" height="4" fill="#3a3a3a"/><rect x="1096" y="205.2" width="1" height="4" fill="#3a3a3a"/><rect x="1098" y="205.2" width="1" height="4" fill="#3a3a3a"/>
<rect x="1080" y="274.0" width="1" height="4" fill="#3a3a3a"/><rect x="1082" y="274.0" width="1" height="4" fill="#3a3a3a"/><rect x="1084" y="274.0" width="1" height="4" fill="#3a3a3a"/><rect x="1086" y="274.0" width="1" height="4" fill="#3a3a3a"/><rect x="1088" y="274.0" width="1" height="4" fill="#3a3a3a"/><rect x="1090" y="274.0" width="1" height="4" fill="#3a3a3a"/><rect x="1092" y="274.0" width="1" height="4" fill="#3a3a3a"/><rect x="1094" y="274.0" width="1" height="4" fill="#3a3a3a"/><rect x="1096" y="274.0" width="1" height="4" fill="#3a3a3a"/><rect x="1098" y="274.0" width="1" height="4" fill="#3a3a3a"/>
<rect x="1080" y="315.2" width="1" height="4" fill="#3a3a3a"/><rect x="1082" y="315.2" width="1" height="4" fill="#3a3a3a"/><rect x="1084" y="315.2" width="1" height="4" fill="#3a3a3a"/><rect x="1086" y="315.2" width="1" height="4" fill="#3a3a3a"/><rect x="1088" y="315.2" width="1" height="4" fill="#3a3a3a"/><rect x="1090" y="315.2" width="1" height="4" fill="#3a3a3a"/><rect x="1092" y="315.2" width="1" height="4" fill="#3a3a3a"/><rect x="1094" y="315.2" width="1" height="4" fill="#3a3a3a"/><rect x="1096" y="315.2" width="1" height="4" fill="#3a3a3a"/><rect x="1098" y="315.2" width="1" height="4" fill="#3a3a3a"/>
<rect x="1080" y="356.2" width="1" height="4" fill="#3a3a3a"/><rect x="1082" y="356.2" width="1" height="4" fill="#3a3a3a"/><rect x="1084" y="356.2" width="1" height="4" fill="#3a3a3a"/><rect x="1086" y="356.2" width="1" height="4" fill="#3a3a3a"/><rect x="1088" y="356.2" width="1" height="4" fill="#3a3a3a"/><rect x="1090" y="356.2" width="1" height="4" fill="#3a3a3a"/><rect x="1092" y="356.2" width="1" height="4" fill="#3a3a3a"/><rect x="1094" y="356.2" width="1" height="4" fill="#3a3a3a"/><rect x="1096" y="356.2" width="1" height="4" fill="#3a3a3a"/><rect x="1098" y="356.2" width="1" height="4" fill="#3a3a3a"/>
<rect x="1080" y="397.1" width="1" height="4" fill="#3a3a3a"/><rect x="1082" y="397.1" width="1" height="4" fill="#3a3a3a"/><rect x="1084" y="397.1" width="1" height="4" fill="#3a3a3a"/><rect x="1086" y="397.1" width="1" height="4" fill="#3a3a3a"/><rect x="1088" y="397.1" width="1" height="4" fill="#3a3a3a"/><rect x="1090" y="397.1" width="1" height="4" fill="#3a3a3a"/><rect x="1092" y="397.1" width="1" height="4" fill="#3a3a3a"/><rect x="1094" y="397.1" width="1" height="4" fill="#3a3a3a"/><rect x="1096" y="397.1" width="1" height="4" fill="#3a3a3a"/><rect x="1098" y="397.1" width="1" height="4" fill="#3a3a3a"/>
<rect x="1080" y="438.1" width="1" height="4" fill="#3a3a3a"/><rect x="1082" y="438.1" width="1" height="4" fill="#3a3a3a"/><rect x="1084" y="438.1" width="1" height="4" fill="#3a3a3a"/><rect x="1086" y="438.1" width="1" height="4" fill="#3a3a3a"/><rect x="1088" y="438.1" width="1" height="4" fill="#3a3a3a"/><rect x="1090" y="438.1" width="1" height="4" fill="#3a3a3a"/><rect x="1092" y="438.1" width="1" height="4" fill="#3a3a3a"/><rect x="1094" y="438.1" width="1" height="4" fill="#3a3a3a"/><rect x="1096" y="438.1" width="1" height="4" fill="#3a3a3a"/><rect x="1098" y="438.1" width="1" height="4" fill="#3a3a3a"/>
<rect x="1120" y="123.3" width="1" height="4" fill="#3a3a3a"/><rect x="1122" y="123.3" width="1" height="4" fill="#3a3a3a"/><rect x="1124" y="123.3" width="1" height="4" fill="#3a3a3a"/><rect x="1126" y="123.3" width="1" height="4" fill="#3a3a3a"/><rect x="1128" y="123.3" width="1" height="4" fill="#3a3a3a"/><rect x="1130" y="123.3" width="1" height="4" fill="#3a3a3a"/><rect x="1132" y="123.3" width="1" height="4" fill="#3a3a3a"/><rect x="1134" y="123.3" width="1" height="4" fill="#3a3a3a"/><rect x="1136" y="123.3" width="1" height="4" fill="#3a3a3a"/><rect x="1138" y="123.3" width="1" height="4" fill="#3a3a3a"/>
<rect x="1120" y="164.2" width="1" height="4" fill="#3a3a3a"/><rect x="1122" y="164.2" width="1" height="4" fill="#3a3a3a"/><rect x="1124" y="164.2" width="1" height="4" fill="#3a3a3a"/><rect x="1126" y="164.2" width="1" height="4" fill="#3a3a3a"/><rect x="1128" y="164.2" width="1" height="4" fill="#3a3a3a"/><rect x="1130" y="164.2" width="1" height="4" fill="#3a3a3a"/><rect x="1132" y="164.2" width="1" height="4" fill="#3a3a3a"/><rect x="1134" y="164.2" width="1" height="4" fill="#3a3a3a"/><rect x="1136" y="164.2" width="1" height="4" fill="#3a3a3a"/><rect x="1138" y="164.2" width="1" height="4" fill="#3a3a3a"/>
<rect x="1120" y="232.8" width="1" height="4" fill="#3a3a3a"/><rect x="1122" y="232.8" width="1" height="4" fill="#3a3a3a"/><rect x="1124" y="232.8" width="1" height="4" fill="#3a3a3a"/><rect x="1126" y="232.8" width="1" height="4" fill="#3a3a3a"/><rect x="1128" y="232.8" width="1" height="4" fill="#3a3a3a"/><rect x="1130" y="232.8" width="1" height="4" fill="#3a3a3a"/><rect x="1132" y="232.8" width="1" height="4" fill="#3a3a3a"/><rect x="1134" y="232.8" width="1" height="4" fill="#3a3a3a"/><rect x="1136" y="232.8" width="1" height="4" fill="#3a3a3a"/><rect x="1138" y="232.8" width="1" height="4" fill="#3a3a3a"/>

<!-- align -->
<path d="M1083.6,134.1 V152.6" stroke="#c6c6c6" stroke-width="1"/><rect x="1085" y="137.1" width="8.3" height="5.4" fill="#c6c6c6"/><rect x="1085" y="145.1" width="13.1" height="5" fill="#c6c6c6"/>
<!-- appearance -->
<circle cx="1130.4" cy="143.3" r="5.9" fill="#c6c6c6"/><circle cx="1130.4" cy="143.3" r="8" fill="none" stroke="#c6c6c6" stroke-width="1.2" stroke-dasharray="2.2 1.4"/>
<!-- transform -->
<rect x="1081.7" y="175.8" width="10" height="12.6" fill="none" stroke="#c6c6c6" stroke-width="1.1"/><rect x="1085.7" y="183" width="12.8" height="9.2" fill="#535353" stroke="#c6c6c6" stroke-width="1.1"/>
<!-- layers -->
<path d="M1130.4,176 L1139,181.7 L1130.4,187.4 L1121.8,181.7 Z" fill="#c6c6c6"/><path d="M1121.8,186 L1124.4,184.4 L1130.4,188.6 L1136.4,184.4 L1139,186 L1130.4,192.6 Z" fill="#c6c6c6"/>
<!-- links -->
<rect x="1121.6" y="208.4" width="10.4" height="7.6" rx="3.8" fill="none" stroke="#c6c6c6" stroke-width="1.5"/><rect x="1128.8" y="208.4" width="10.4" height="7.6" rx="3.8" fill="none" stroke="#c6c6c6" stroke-width="1.5"/>
<!-- play -->
<path d="M1085,219.1 V232 L1097.2,225.5 Z" fill="#c6c6c6"/>
<!-- actions/bookmark -->
<rect x="1082.5" y="245.7" width="13" height="12.8" fill="none" stroke="#c6c6c6" stroke-width="1"/><rect x="1084.6" y="247.6" width="13" height="13" fill="#535353" stroke="#c6c6c6" stroke-width="1"/><path d="M1091.1,247.8 H1094.9 V255.4 L1093,253.8 L1091.1,255.4 Z" fill="#c6c6c6"/>
<!-- character -->
<path d="M1137.4,244.1 V262.2" stroke="#c6c6c6" stroke-width="1"/>
<!-- paragraph -->
<path d="M1135.2,275.3 H1128.4 A4.4,4.4 0 0 0 1128.4,284.1 H1130.6 V289.8 H1131.8 V276.5 H1133.4 V289.8 H1134.6 V276.5 H1135.2 Z" fill="#c6c6c6"/>
<!-- transparency -->
<circle cx="1087.4" cy="292.4" r="6.4" fill="#c0c0c0"/><circle cx="1092.2" cy="297" r="6" fill="#7c7c7c" fill-opacity=".85" stroke="#cfcfcf" stroke-width=".9"/>
<!-- stroke -->
<rect x="1082" y="329" width="17.2" height="1" fill="#c6c6c6"/><rect x="1082" y="333.2" width="17.2" height="1.9" fill="#c6c6c6"/><rect x="1082" y="338" width="17.2" height="3" fill="#c6c6c6"/>
<!-- info -->
<circle cx="1090.4" cy="376.6" r="8.4" fill="#c6c6c6"/><circle cx="1090.6" cy="372.2" r="1.5" fill="#4a4a4a"/><path d="M1088.2,375 H1091.8 V379.8 H1093 V381.4 H1088 V379.8 H1089.4 V376.6 H1088.2 Z" fill="#4a4a4a"/>
<!-- swatches -->
<rect x="1082" y="412" width="16.1" height="11.1" fill="#d0d0d0"/><rect x="1083.2" y="413.2" width="3.8" height="3.8" fill="#8c8c8c"/><rect x="1093.1" y="413.2" width="3.8" height="3.8" fill="#777"/><rect x="1083.2" y="418.2" width="3.8" height="3.8" fill="#777"/><rect x="1088.2" y="418.2" width="3.8" height="3.8" fill="#999"/><rect x="1093.1" y="418.2" width="3.8" height="3.8" fill="#8c8c8c"/>
<!-- palette -->
<path d="M1090,451.4 C1095,450.4 1100.2,453.4 1100.2,458 C1100.2,462.6 1095.4,465.4 1090.4,465.2 C1085.4,465 1080.8,462.6 1080.8,459.4 C1080.8,456.8 1083.6,456.2 1086,456.4 C1088,456.6 1088.6,455.4 1088.2,454 C1087.8,452.6 1088.6,451.6 1090,451.4Z" fill="#c6c6c6"/>
<circle cx="1085.5" cy="460.6" r="1.6" fill="#666"/><circle cx="1090.2" cy="461.8" r="1.6" fill="#666"/><circle cx="1094.4" cy="461.2" r="1.4" fill="#666"/><circle cx="1097" cy="458.8" r="1.2" fill="#666"/><circle cx="1096" cy="455.6" r="1.1" fill="#666"/>
<!-- gradient -->
<rect x="1082.6" y="480.6" width="16" height="11" fill="url(#gr3)" stroke="#d6d6d6" stroke-width="1.2"/>

<text x="1122.6" y="259.8" font-family="Liberation Sans,sans-serif" font-size="18.5" fill="#c6c6c6">A</text>
<text x="1122" y="317.4" font-family="Liberation Serif,serif" font-style="italic" font-size="23" fill="#c6c6c6">O</text>
</svg>
 </div>
 <div id="frame"></div>
</div>
</body>
</html>
